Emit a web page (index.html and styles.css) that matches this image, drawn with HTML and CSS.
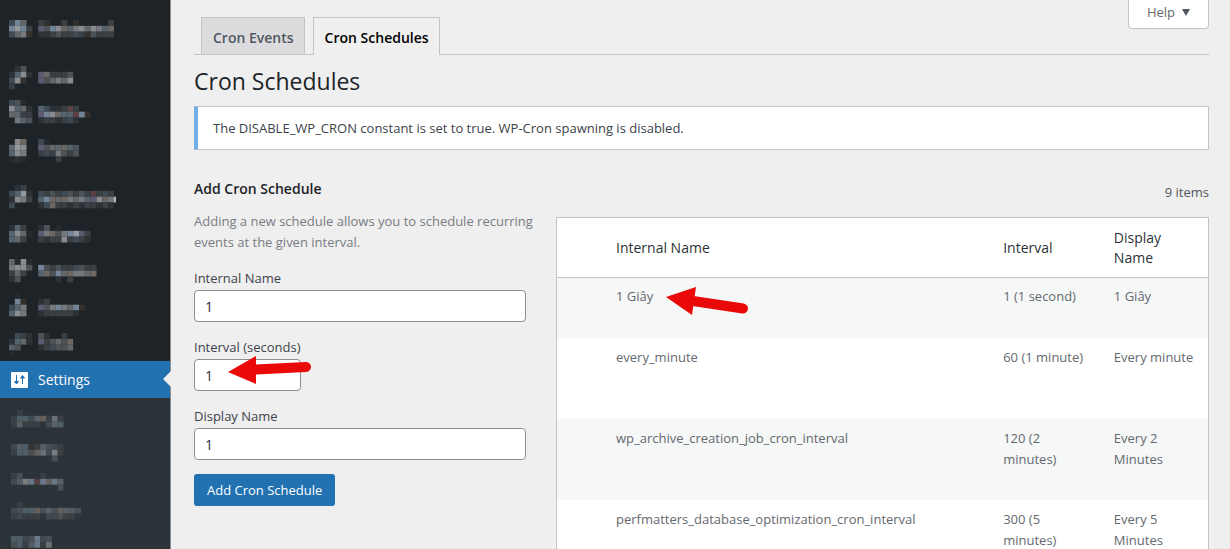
FILE: index.html
```
<!DOCTYPE html>
<html lang="en">
<head>
<meta charset="utf-8">
<title>Cron Schedules</title>
<link rel="stylesheet" href="styles.css">
</head>
<body>
<div class="admin">
  <nav class="sidebar" aria-label="Main menu">
    <ul class="menu">
      <li class="menu-item" data-mosaic="dashboard"></li>
      <li class="menu-gap"></li>
      <li class="menu-item" data-mosaic="posts"></li>
      <li class="menu-item" data-mosaic="media"></li>
      <li class="menu-item" data-mosaic="pages"></li>
      <li class="menu-gap"></li>
      <li class="menu-item" data-mosaic="appearance"></li>
      <li class="menu-item" data-mosaic="plugins"></li>
      <li class="menu-item" data-mosaic="snippets"></li>
      <li class="menu-item" data-mosaic="users"></li>
      <li class="menu-item" data-mosaic="tools"></li>
      <li>
        <a class="menu-current" href="#settings">
          <svg class="menu-icon" viewBox="0 0 17 16" aria-hidden="true">
            <rect width="17" height="16" rx="1" fill="#fff"/>
            <path d="M5.500 3v7M3.500 9.500h4l-2 2.500z" fill="#2271b1" stroke="#2271b1"/>
            <path d="M11.500 5v7M9.500 6h4l-2-2.500z" fill="#2271b1" stroke="#2271b1"/>
          </svg>
          <span>Settings</span>
        </a>
        <ul class="submenu">
          <li class="submenu-item" data-mosaic="general"></li>
          <li class="submenu-item" data-mosaic="writing"></li>
          <li class="submenu-item" data-mosaic="reading"></li>
          <li class="submenu-item" data-mosaic="discussion"></li>
          <li class="submenu-item" data-mosaic="more"></li>
        </ul>
      </li>
    </ul>
  </nav>

  <main class="content">
    <button class="help" type="button">Help <span class="caret"></span></button>
    <nav class="tabs" aria-label="Cron">
      <a class="tab" href="#events">Cron Events</a>
      <a class="tab tab-active" href="#schedules">Cron Schedules</a>
    </nav>
    <h1 class="title">Cron Schedules</h1>
    <div class="notice">The DISABLE_WP_CRON constant is set to true. WP-Cron spawning is disabled.</div>

    <div class="columns">
      <form class="form">
        <h2 class="form-title">Add Cron Schedule</h2>
        <p class="hint">Adding a new schedule allows you to schedule recurring events at the given interval.</p>
        <div class="field">
          <label for="internal">Internal Name</label>
          <input class="input" id="internal" type="text" value="1">
        </div>
        <div class="field">
          <label for="interval">Interval (seconds)</label>
          <input class="input input-short" id="interval" type="text" value="1">
          <svg class="arrow arrow-field" viewBox="0 0 84 30" aria-hidden="true">
            <path d="M28 15.500L78 13" stroke="#ea0909" stroke-width="10" stroke-linecap="round"/>
            <path d="M0 18L28 2v28z" fill="#ea0909"/>
          </svg>
        </div>
        <div class="field">
          <label for="display">Display Name</label>
          <input class="input" id="display" type="text" value="1">
        </div>
        <button class="submit" type="button">Add Cron Schedule</button>
      </form>

      <section class="list">
        <p class="count">9 items</p>
        <table class="table">
          <thead>
            <tr><th class="col-mark"></th><th class="col-name">Internal Name</th><th class="col-interval">Interval</th><th class="col-display">Display Name</th></tr>
          </thead>
          <tbody>
            <tr class="row-short">
              <td></td>
              <td><span class="marked">1 Giây
                <svg class="arrow arrow-row" viewBox="0 0 84 30" aria-hidden="true">
                  <path d="M27 14L77 21.500" stroke="#ea0909" stroke-width="10" stroke-linecap="round"/>
                  <path d="M0 10L30 0l-4 28z" fill="#ea0909"/>
                </svg></span></td>
              <td>1 (1 second)</td><td>1 Giây</td>
            </tr>
            <tr><td></td><td>every_minute</td><td>60 (1 minute)</td><td>Every minute</td></tr>
            <tr><td></td><td>wp_archive_creation_job_cron_interval</td><td>120 (2 minutes)</td><td>Every 2 Minutes</td></tr>
            <tr><td></td><td>perfmatters_database_optimization_cron_interval</td><td>300 (5 minutes)</td><td>Every 5 Minutes</td></tr>
          </tbody>
        </table>
      </section>
    </div>
  </main>
</div>
<script src="mosaic.js"></script>
</body>
</html>
```

FILE: styles.css
```
* { box-sizing: border-box; }
body {
  margin: 0;
  background: #efefef;
  color: #3c434a;
  font: 13px/21px "Open Sans", "Noto Sans", sans-serif;
}
ul { list-style: none; margin: 0; padding: 0; }
a { text-decoration: none; }
.admin { display: flex; height: 100vh; overflow: hidden; }

.sidebar { flex: 0 0 171px; background: #1d2327; border-right: 1px solid #8c8f91; }
.menu { padding-top: 13px; }
.menu-item { height: 36px; padding-left: 9px; }
.menu-gap { height: 12px; }
.mosaic { display: block; opacity: 0.85; }
.menu-current {
  position: relative;
  display: flex;
  align-items: center;
  gap: 10px;
  height: 37px;
  padding-left: 11px;
  background: #2271b1;
  color: #fff;
  font-size: 14px;
}
.menu-current::after {
  content: "";
  position: absolute;
  right: -1px;
  top: 10px;
  border: 8px solid transparent;
  border-right-color: #efefef;
  border-left: 0;
}
.menu-icon { width: 17px; height: 16px; }
.submenu { background: #2c3338; padding: 8px 0; height: 200px; }
.submenu-item { height: 30px; padding-left: 11px; }
.submenu .mosaic { opacity: 0.7; }

.content { position: relative; flex: 1; min-width: 0; padding: 17px 21px 0 23px; }
.help {
  position: absolute;
  top: 0;
  right: 21px;
  display: flex;
  align-items: center;
  justify-content: center;
  gap: 7px;
  width: 81px;
  height: 29px;
  padding: 0 0 3px;
  border: 1px solid #c3c4c7;
  border-top: 0;
  border-radius: 0 0 4px 4px;
  background: #fff;
  color: #646970;
  font: inherit;
}
.caret { border: 4px solid transparent; border-top: 7px solid #50575e; border-bottom: 0; }
.tabs { display: flex; gap: 8px; padding-left: 7px; border-bottom: 1px solid #c3c4c7; }
.tab {
  height: 37px;
  padding: 8px 10px 8px 11px;
  border: 1px solid #c3c4c7;
  border-bottom: 0;
  background: #dcdcde;
  color: #50575e;
  font-size: 14px;
  font-weight: 600;
  line-height: 24px;
}
.tab-active { margin-bottom: -1px; height: 38px; background: #efefef; color: #000; }
.title { margin: 9px 0 8px; color: #1d2327; font-size: 23px; font-weight: 400; line-height: 34px; }
.notice {
  padding: 11px 15px 10px;
  border: 1px solid #c3c4c7;
  border-left: 4px solid #72aee6;
  background: #fff;
}

.columns { display: grid; grid-template-columns: minmax(0, 344fr) minmax(0, 653fr); gap: 18px; }
.form-title { margin: 28px 0 12px; color: #1d2327; font-size: 14px; font-weight: 600; line-height: 21px; }
.hint { margin: 0; color: #787c82; }
.field { position: relative; display: flex; flex-direction: column; margin-top: 13px; margin-right: 12px; }
.input {
  width: 100%;
  height: 32px;
  padding: 0 10px;
  border: 1px solid #8c8f94;
  border-radius: 4px;
  background: #fff;
  color: #2c3338;
  font: inherit;
  font-size: 14px;
}
.input-short { width: 107px; }
.field label { line-height: 24px; }
.submit {
  margin-top: 14px;
  height: 32px;
  padding: 0 13px;
  border: 0;
  border-radius: 3px;
  background: #2271b1;
  color: #fff;
  font: inherit;
}
.arrow { position: absolute; width: 84px; height: 30px; fill: none; }
.arrow-field { left: 34px; top: 19px; }
.arrow-row { left: 50px; top: 0; }

.count { margin: 32px 0 14px; color: #50575e; text-align: right; }
.table {
  width: 100%;
  table-layout: fixed;
  border: 1px solid #c3c4c7;
  border-spacing: 0;
  background: #fff;
}
.table th {
  height: 60px;
  padding: 8px 10px;
  border-bottom: 1px solid #c3c4c7;
  color: #2c3338;
  font-size: 14px;
  font-weight: 400;
  line-height: 20px;
  text-align: left;
}
.table td { height: 81px; padding: 9px 10px; color: #646970; vertical-align: top; }
.table .row-short td { height: 60px; padding-top: 8px; }
.table tbody tr:nth-child(odd) { background: #f6f7f7; }
.table .col-mark { width: 49px; padding: 0; }
.col-interval { width: 17%; }
.col-display { width: 16%; }
.marked { position: relative; }
```

FILE: mosaic.js
```
// Obscured menu entries, drawn as coloured tiles: each letter is a palette entry.
const palette = {
  a: "#262c30", b: "#30353a", c: "#404549", d: "#565b5f", e: "#6e7376",
  f: "#85898c", g: "#9c9ea1", p: "#68647f", l: "#8296aa", s: "#46535d",
  t: "#7b736e", r: "#66464a", n: "#39332f", m: "#a9adb5", k: "#5f6f7c",
  h: "#d0d0ce"
};
const entries = {
  dashboard: { y: 7, rows: ["sle..cn..c.n.....c", "lmlc.pdlgtkfgegfkt", "sefn.bbcdccscndccc"] },
  posts: { y: 5, rows: [".bd.", "bkgb.ptcccd", "sgn..pdefeg", "c..."] },
  media: { y: 3, rows: ["sda.", "gkeb.ksbbcrc", "eecc.plgtkkrln", ".fkd.bccbcsb"] },
  pages: { y: 6, rows: [".gt..sa", "emg..pdeetkd", "kgf..cscfdcd", "aba.....c"] },
  appearance: { y: 4, rows: [".bc.", "skmb.scdcsdcdcrcsc", "bgfc.kltetfefkpgtfh", "s....bstccbcbccbcb"] },
  plugins: { y: 8, rows: ["bkc..bd.a", "kgea.pftdflmpc", "kec..cbccgcscn"] },
  snippets: { y: 6, rows: ["eaga", "fggd.ldcdccsdcc", "cec..ktdletffet", "bd......b.c"] },
  users: { y: 4, rows: [".a..", ".ln..bc", "skf..pdflfeln", "kgf..bcccccb"] },
  tools: { y: 8, rows: [".scb.db..c", "bkeb.pcdedt", "kd...bcsdde", "a..."] },
  general: { y: 4, rows: [".c......b", "ckksetcfc", "cecccbsek"] },
  writing: { y: 8, rows: ["sekncedsc", "ckkdtfsgc", ".......d"] },
  reading: { y: 7, rows: ["cd...c.b", "skglrltle", "........d"] },
  discussion: { y: 6, rows: ["bc......b", "sdkktdedtekd", "cscccbssdccb"] },
  more: { y: 10, rows: ["kksdlsd", "dkcklcf"] }
};
const ns = "http://www.w3.org/2000/svg";
const tile = 35 / 6;

document.querySelectorAll("[data-mosaic]").forEach((holder) => {
  const entry = entries[holder.dataset.mosaic];
  const svg = document.createElementNS(ns, "svg");
  svg.setAttribute("class", "mosaic");
  svg.setAttribute("width", 120);
  svg.setAttribute("height", holder.clientHeight);
  svg.setAttribute("aria-hidden", "true");
  entry.rows.forEach((row, r) => {
    [...row].forEach((key, c) => {
      if (!palette[key]) return;
      const rect = document.createElementNS(ns, "rect");
      rect.setAttribute("x", c * tile);
      rect.setAttribute("y", entry.y + r * tile);
      rect.setAttribute("width", key === "h" ? 2 : tile);
      rect.setAttribute("height", tile);
      rect.setAttribute("fill", palette[key]);
      svg.append(rect);
    });
  });
  holder.append(svg);
});
```
